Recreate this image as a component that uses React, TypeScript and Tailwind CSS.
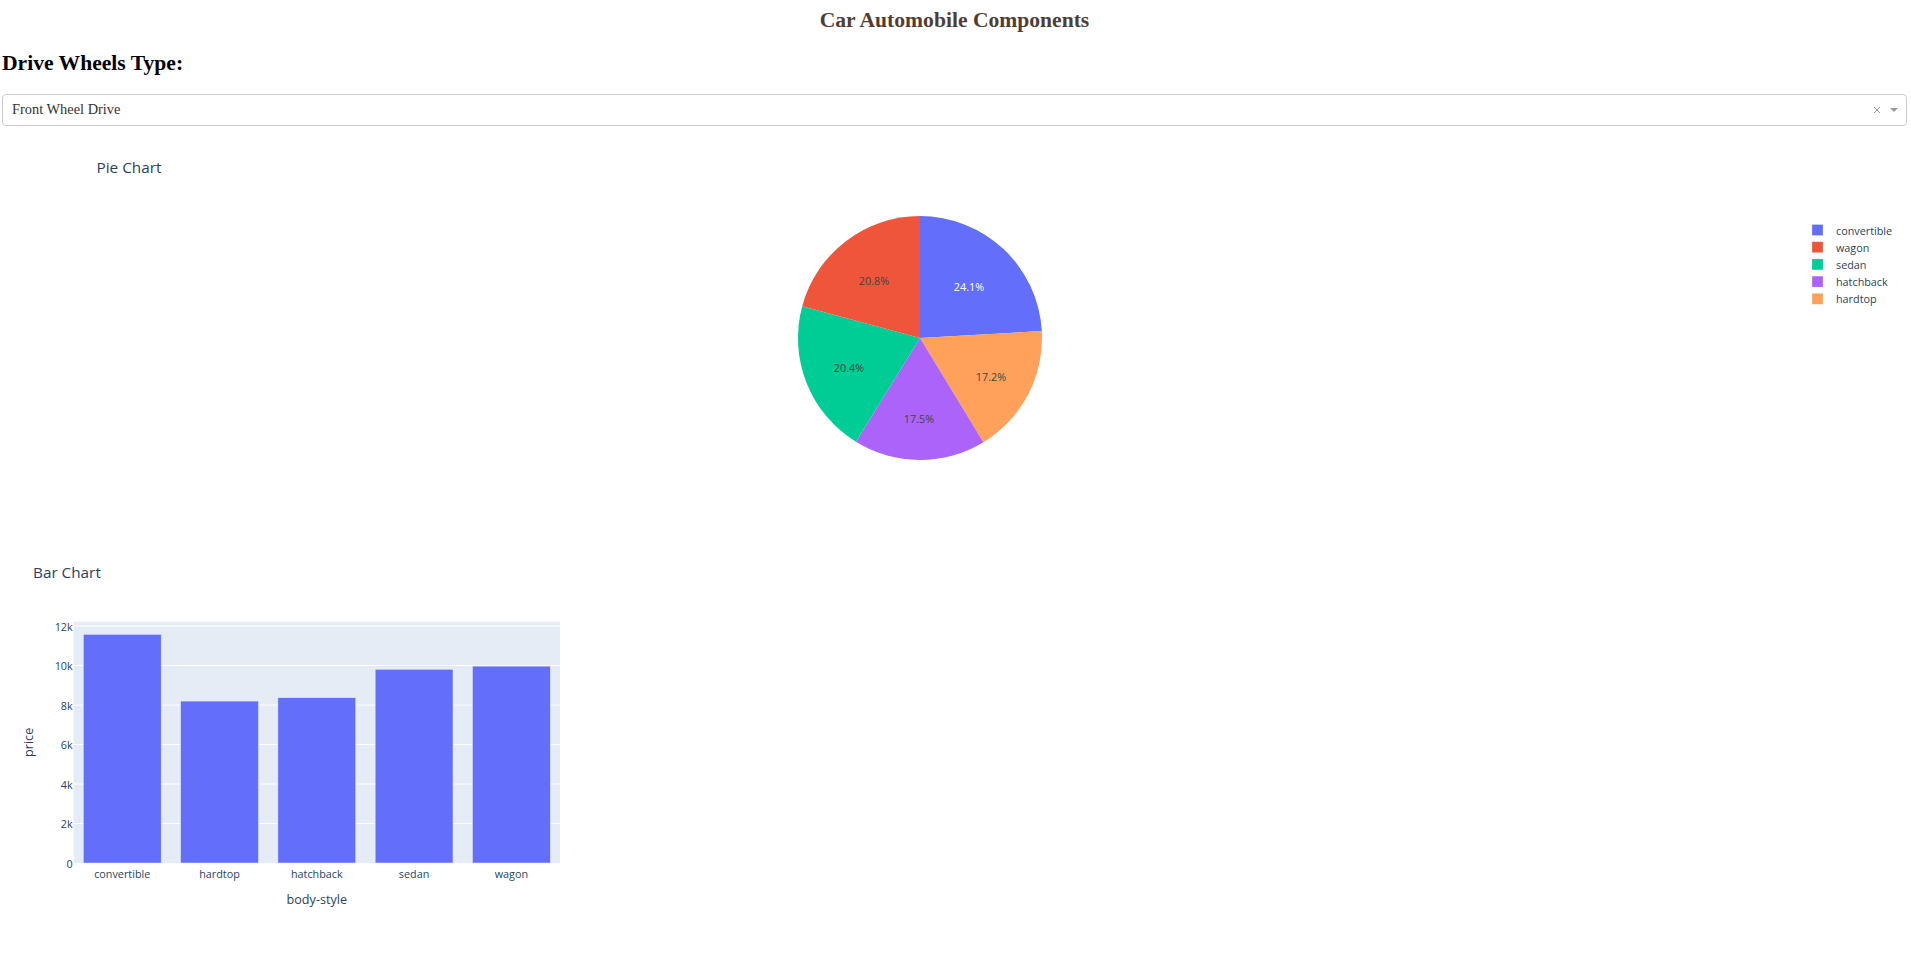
import React from 'react';

type Slice = { label: string; value: number; color: string; text: string };

const slices: Slice[] = [
  { label: 'convertible', value: 24.1, color: '#636efa', text: '#ffffff' },
  { label: 'hardtop', value: 17.2, color: '#FFA15A', text: '#444444' },
  { label: 'hatchback', value: 17.5, color: '#ab63fa', text: '#444444' },
  { label: 'sedan', value: 20.4, color: '#00cc96', text: '#444444' },
  { label: 'wagon', value: 20.8, color: '#EF553B', text: '#444444' },
];

// label positions measured from the plot (svg coords)
const pieLabels: Record<string, [number, number]> = {
  convertible: [967, 160],
  wagon: [872, 154],
  sedan: [847, 241],
  hatchback: [917, 292],
  hardtop: [989, 250],
};

const legendOrder = ['convertible', 'wagon', 'sedan', 'hatchback', 'hardtop'];

const bars = [
  { label: 'convertible', value: 11580 },
  { label: 'hardtop', value: 8200 },
  { label: 'hatchback', value: 8370 },
  { label: 'sedan', value: 9810 },
  { label: 'wagon', value: 9970 },
];

const CX = 918;
const CY = 212;
const R = 122;

function point(deg: number) {
  const a = (deg * Math.PI) / 180;
  return [CX + R * Math.sin(a), CY - R * Math.cos(a)];
}

function slicePath(start: number, end: number) {
  const [x0, y0] = point(start);
  const [x1, y1] = point(end);
  const large = end - start > 180 ? 1 : 0;
  return `M${CX},${CY} L${x0},${y0} A${R},${R} 0 ${large} 1 ${x1},${y1} Z`;
}

const PieChart: React.FC = () => {
  let acc = 0;
  return (
    <svg width={1904} height={405} className="block">
      <text x={94.5} y={40.7} fontSize={15.3} fill="#2a3f5f" dominantBaseline="central">
        Pie Chart
      </text>
      {slices.map((s) => {
        const start = acc * 3.6;
        acc += s.value;
        const end = acc * 3.6;
        return <path key={s.label} d={slicePath(start, end)} fill={s.color} />;
      })}
      {slices.map((s) => {
        const [x, y] = pieLabels[s.label];
        return (
          <text key={s.label} x={x} y={y} fontSize={10.8} fill={s.text} textAnchor="middle" dominantBaseline="central">
            {s.value.toFixed(1)}%
          </text>
        );
      })}
      {/* legend */}
      {legendOrder.map((name, i) => {
        const s = slices.find((x) => x.label === name)!;
        const cy = 104 + i * 17.2;
        return (
          <g key={name}>
            <rect x={1810} y={cy - 5.5} width={11} height={11} fill={s.color} stroke="#ffffff" strokeOpacity={0.5} strokeWidth={0.5} />
            <text x={1834} y={cy} fontSize={10.8} fill="#2a3f5f" dominantBaseline="central">
              {name}
            </text>
          </g>
        );
      })}
    </svg>
  );
};

const BarChart: React.FC = () => {
  const x0 = 71.6;
  const x1 = 558;
  const y0 = 90.7;
  const y1 = 332;
  const yMax = 12220;
  const cat = (x1 - x0) / bars.length;
  const yOf = (v: number) => y1 - ((y1 - y0) * v) / yMax;
  const ticks = [0, 2000, 4000, 6000, 8000, 10000, 12000];
  return (
    <svg width={630} height={405} className="block">
      <text x={31} y={40.6} fontSize={15.3} fill="#2a3f5f" dominantBaseline="central">
        Bar Chart
      </text>
      <rect x={x0} y={y0} width={x1 - x0} height={y1 - y0} fill="#E5ECF6" />
      {ticks.map((t) => (
        <g key={t}>
          {t > 0 && <line x1={x0} x2={x1} y1={yOf(t)} y2={yOf(t)} stroke="#ffffff" strokeWidth={1} />}
          <text x={70.7} y={yOf(t)} fontSize={10.8} fill="#2a3f5f" textAnchor="end" dominantBaseline="central">
            {t === 0 ? '0' : `${t / 1000}k`}
          </text>
        </g>
      ))}
      {bars.map((b, i) => {
        const left = x0 + i * cat + cat * 0.1;
        const top = yOf(b.value);
        return (
          <g key={b.label}>
            <rect x={left} y={top} width={cat * 0.8} height={y1 - top} fill="#636efa" stroke="#E5ECF6" strokeWidth={0.5} />
            <text x={x0 + i * cat + cat / 2} y={342.3} fontSize={10.8} fill="#2a3f5f" textAnchor="middle" dominantBaseline="central">
              {b.label}
            </text>
          </g>
        );
      })}
      <text x={(x0 + x1) / 2} y={368} fontSize={12.6} fill="#2a3f5f" textAnchor="middle" dominantBaseline="central">
        body-style
      </text>
      <text
        x={27}
        y={(y0 + y1) / 2}
        fontSize={12.6}
        fill="#2a3f5f"
        textAnchor="middle"
        dominantBaseline="central"
        transform={`rotate(-90 27 ${(y0 + y1) / 2})`}
      >
        price
      </text>
    </svg>
  );
};

export default function App() {
  return (
    <div className="min-h-screen bg-white pl-[2px] pr-[4px] font-['Liberation_Serif',serif]">
      <h1 className="pt-[8px] h-[32px] text-center text-[21.6px] leading-[24px] font-bold text-[#503D36]">
        Car Automobile Components
      </h1>
      <h2 className="mt-[19px] h-[24px] text-[21.6px] leading-[24px] font-bold text-black">Drive Wheels Type:</h2>
      <div className="mt-[19px] h-[32px] flex items-center rounded-[4px] border border-[#cccccc] bg-white pl-[9px] pr-[8px]">
        <span className="flex-1 text-[14.4px] text-[#333333]">Front Wheel Drive</span>
        <svg width={8} height={8} viewBox="0 0 8 8" className="mr-[9px]">
          <path d="M1 1 L7 7 M7 1 L1 7" stroke="#999999" strokeWidth={1} />
        </svg>
        <span className="w-0 h-0 border-x-[4.5px] border-x-transparent border-t-[4.5px] border-t-[#999999]" />
      </div>
      <div className="font-['Open_Sans','Liberation_Sans',sans-serif]">
        <PieChart />
        <BarChart />
      </div>
    </div>
  );
}
